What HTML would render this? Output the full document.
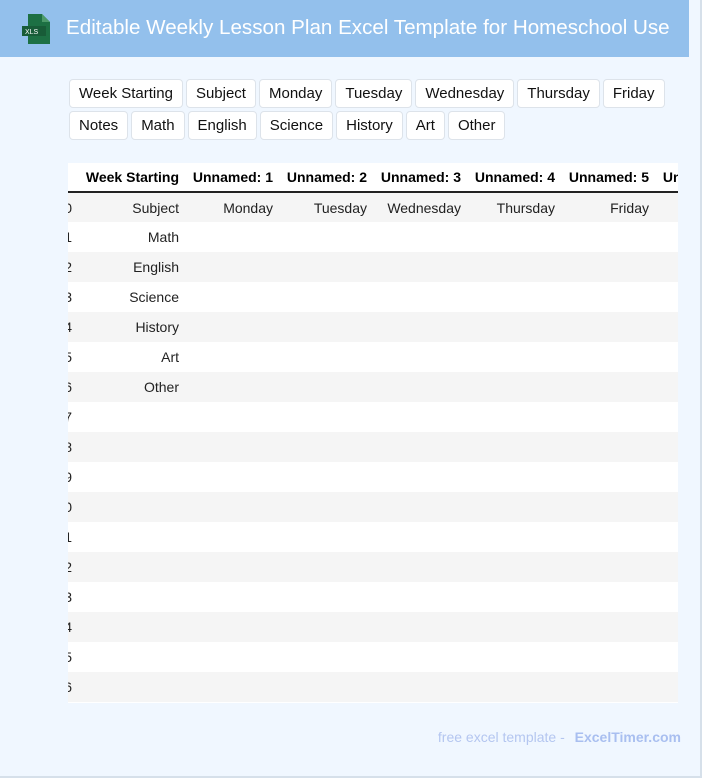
<!DOCTYPE html>
<html><head><meta charset="utf-8"><style>
*{box-sizing:border-box;margin:0;padding:0}
body{width:702px;height:778px;background:#f0f7ff;font-family:"Liberation Sans",sans-serif;position:relative;overflow:hidden;box-shadow:inset -2px -2px 0 #d6e0ea}
.hdr{position:absolute;left:0;top:0;width:689px;height:57px;background:#93c0ec}
.hdr h1{position:absolute;left:66px;top:16px;font-size:20.6px;font-weight:normal;color:#fff;white-space:nowrap}
.ic{position:absolute;left:22px;top:14px;width:28px;height:30px}
.btns{position:absolute;left:69px;top:79px;width:610px}
.b{float:left;height:29px;line-height:27px;padding:0 9px;border:1px solid #dde3ea;border-radius:4px;background:#fff;font-size:15px;color:#111;margin:0 3px 3px 0}
.tw{position:absolute;left:68px;top:163px;width:610px;height:540px;overflow:hidden;background:#fff}
table{border-collapse:collapse;position:absolute;left:-20px;top:0;font-size:14px;table-layout:fixed;width:701px}
th{height:29px;font-weight:bold;text-align:right;padding:0 6px;white-space:nowrap;border-bottom:2px solid #222;overflow:hidden}
td{height:30px;text-align:right;padding:0 6px;white-space:nowrap;color:#222;overflow:hidden}
tr:nth-child(even) td{background:#f5f5f5}
.ft{position:absolute;right:21px;top:729px;font-size:14px;color:#b4c6f0}
.ft b{color:#a9bff0;margin-left:6px}
</style></head><body>
<div class="hdr"><svg class="ic" viewBox="0 0 28 30"><path d="M6 0h14l8 8v22H6z" fill="#1d7044"/><path d="M20 0l8 8h-8z" fill="#4c9a6a"/><rect x="0" y="12" width="24" height="10" fill="#185c38"/><text x="3" y="20" font-size="7" fill="#fff" font-family="Liberation Sans">XLS</text></svg><h1>Editable Weekly Lesson Plan Excel Template for Homeschool Use</h1></div>
<div class="btns">
<span class="b">Week Starting</span><span class="b">Subject</span><span class="b">Monday</span><span class="b">Tuesday</span><span class="b">Wednesday</span><span class="b">Thursday</span><span class="b">Friday</span>
<span class="b" style="clear:left">Notes</span><span class="b">Math</span><span class="b">English</span><span class="b">Science</span><span class="b">History</span><span class="b">Art</span><span class="b">Other</span>
</div>
<div class="tw"><table>
<colgroup><col style="width:30px"><col style="width:107px"><col style="width:94px"><col style="width:94px"><col style="width:94px"><col style="width:94px"><col style="width:94px"><col style="width:94px"></colgroup>
<tr><th></th><th>Week Starting</th><th>Unnamed: 1</th><th>Unnamed: 2</th><th>Unnamed: 3</th><th>Unnamed: 4</th><th>Unnamed: 5</th><th>Unnamed: 6</th></tr>
<tr><td>0</td><td>Subject</td><td>Monday</td><td>Tuesday</td><td>Wednesday</td><td>Thursday</td><td>Friday</td><td></td></tr>
<tr><td>1</td><td>Math</td><td></td><td></td><td></td><td></td><td></td><td></td></tr>
<tr><td>2</td><td>English</td><td></td><td></td><td></td><td></td><td></td><td></td></tr>
<tr><td>3</td><td>Science</td><td></td><td></td><td></td><td></td><td></td><td></td></tr>
<tr><td>4</td><td>History</td><td></td><td></td><td></td><td></td><td></td><td></td></tr>
<tr><td>5</td><td>Art</td><td></td><td></td><td></td><td></td><td></td><td></td></tr>
<tr><td>6</td><td>Other</td><td></td><td></td><td></td><td></td><td></td><td></td></tr>
<tr><td>7</td><td></td><td></td><td></td><td></td><td></td><td></td><td></td></tr>
<tr><td>8</td><td></td><td></td><td></td><td></td><td></td><td></td><td></td></tr>
<tr><td>9</td><td></td><td></td><td></td><td></td><td></td><td></td><td></td></tr>
<tr><td>10</td><td></td><td></td><td></td><td></td><td></td><td></td><td></td></tr>
<tr><td>11</td><td></td><td></td><td></td><td></td><td></td><td></td><td></td></tr>
<tr><td>12</td><td></td><td></td><td></td><td></td><td></td><td></td><td></td></tr>
<tr><td>13</td><td></td><td></td><td></td><td></td><td></td><td></td><td></td></tr>
<tr><td>14</td><td></td><td></td><td></td><td></td><td></td><td></td><td></td></tr>
<tr><td>15</td><td></td><td></td><td></td><td></td><td></td><td></td><td></td></tr>
<tr><td>16</td><td></td><td></td><td></td><td></td><td></td><td></td><td></td></tr>
</table></div>
<div class="ft">free excel template - <b>ExcelTimer.com</b></div>
</body></html>
